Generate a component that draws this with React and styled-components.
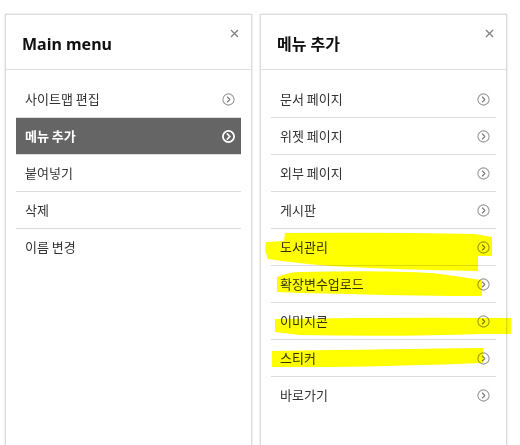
import styled, { createGlobalStyle } from "styled-components";

const GlobalStyle = createGlobalStyle`
  html, body {
    margin: 0;
    padding: 0;
    background: #fff;
    overflow: hidden;
  }
  body {
    font-family: "Noto Sans", "Noto Sans CJK KR", sans-serif;
  }
`;

const Stage = styled.div`
  position: relative;
  width: 520px;
  height: 445px;
  overflow: hidden;
  display: flex;
  gap: 8px;
  padding: 14px 0 0 5px;
  box-sizing: border-box;
`;

const Panel = styled.div`
  position: relative;
  flex: none;
  width: 247px;
  height: 450px;
  box-sizing: border-box;
  background: #fff;
  border: 1px solid #dcdcdc;
  box-shadow: 0 0 2px rgba(0, 0, 0, 0.18);
  display: flex;
  flex-direction: column;
`;

const Header = styled.div`
  height: 55px;
  box-sizing: border-box;
  padding: 4px 16px 0;
  display: flex;
  align-items: center;
  border-bottom: 1px solid #dedede;
`;

const Title = styled.h2`
  margin: 0;
  font-size: 16px;
  line-height: 20px;
  font-weight: 700;
  color: #111;
  font-family: "Noto Sans", "Noto Sans CJK KR", sans-serif;
`;

const Close = styled.button`
  position: absolute;
  top: 13px;
  right: 12px;
  width: 10px;
  height: 10px;
  padding: 0;
  border: 0;
  background: none;
  display: flex;
  align-items: center;
  justify-content: center;
  cursor: pointer;
`;

const List = styled.ul`
  list-style: none;
  margin: 0;
  padding: 11px 10px 10px;
`;

const Row = styled.li`
  height: 36px;
  display: flex;
  align-items: center;
  justify-content: space-between;
  padding: 0 6px 0 9px;
  border-bottom: 1px solid #dcdcdc;
  background: ${({ $active }) => ($active ? "#656565" : "transparent")};
  color: ${({ $active }) => ($active ? "#fff" : "#333")};
  font-weight: ${({ $active }) => ($active ? 700 : 400)};
  font-size: 13px;
  font-family: "Noto Sans CJK KR", sans-serif;
  &:last-child {
    border-bottom: 0;
  }
`;

const Label = styled.span`
  line-height: 18px;
`;

const Highlight = styled.svg`
  position: absolute;
  left: 0;
  top: 0;
  pointer-events: none;
  mix-blend-mode: multiply;
`;

const CloseIcon = () => (
  <svg width="9" height="9" viewBox="0 0 9 9">
    <path d="M1 1 L8 8 M8 1 L1 8" stroke="#808080" strokeWidth="1.3" />
  </svg>
);

const Chevron = ({ active }) => (
  <svg width="13" height="13" viewBox="0 0 13 13">
    <circle
      cx="6.5"
      cy="6.5"
      r="5.6"
      fill="none"
      stroke={active ? "#fff" : "#9a9a9a"}
      strokeWidth={active ? 1.8 : 1.1}
    />
    <path
      d="M5.4 4 L7.8 6.5 L5.4 9"
      fill="none"
      stroke={active ? "#fff" : "#777"}
      strokeWidth={active ? 1.8 : 1.1}
      strokeLinecap="round"
      strokeLinejoin="round"
    />
  </svg>
);

const mainItems = [
  { label: "사이트맵 편집", arrow: true },
  { label: "메뉴 추가", arrow: true, active: true },
  { label: "붙여넣기" },
  { label: "삭제" },
  { label: "이름 변경" },
];

const addItems = [
  "문서 페이지",
  "위젯 페이지",
  "외부 페이지",
  "게시판",
  "도서관리",
  "확장변수업로드",
  "이미지콘",
  "스티커",
  "바로가기",
];

const MenuPanel = ({ title, items }) => (
  <Panel>
    <Header>
      <Title>{title}</Title>
    </Header>
    <Close aria-label="close">
      <CloseIcon />
    </Close>
    <List>
      {items.map(({ label, arrow, active }) => (
        <Row key={label} $active={active}>
          <Label>{label}</Label>
          {arrow && <Chevron active={active} />}
        </Row>
      ))}
    </List>
  </Panel>
);

const App = () => {
  return (
    <>
      <GlobalStyle />
      <Stage>
        <MenuPanel title="Main menu" items={mainItems} />
        <MenuPanel
          title="메뉴 추가"
          items={addItems.map((label) => ({ label, arrow: true }))}
        />
        {/* highlighter marks drawn over the screenshot */}
        <Highlight width="520" height="445" viewBox="0 0 520 445">
          <g fill="#ffff00">
            <path d="M285 233 Q380 232 475 234 L492 237 L492 256 L478 256 L478 271 Q400 270 330 266 Q295 263 268 259 L265 250 L266 242 L284 241 Z" />
            <path d="M277 277 Q290 272 300 272 Q400 270 440 274 L482 280 L482 296 Q420 296 350 294 L300 293 L277 292 Z" />
            <path d="M275 319 Q400 317 511 318 L511 334 L480 334 Q400 337 300 335 L275 332 Z" />
            <path d="M272 351 Q400 349 483 348 L483 363 Q400 366 330 367 L272 367 Z" />
          </g>
        </Highlight>
      </Stage>
    </>
  );
};

export default App;
